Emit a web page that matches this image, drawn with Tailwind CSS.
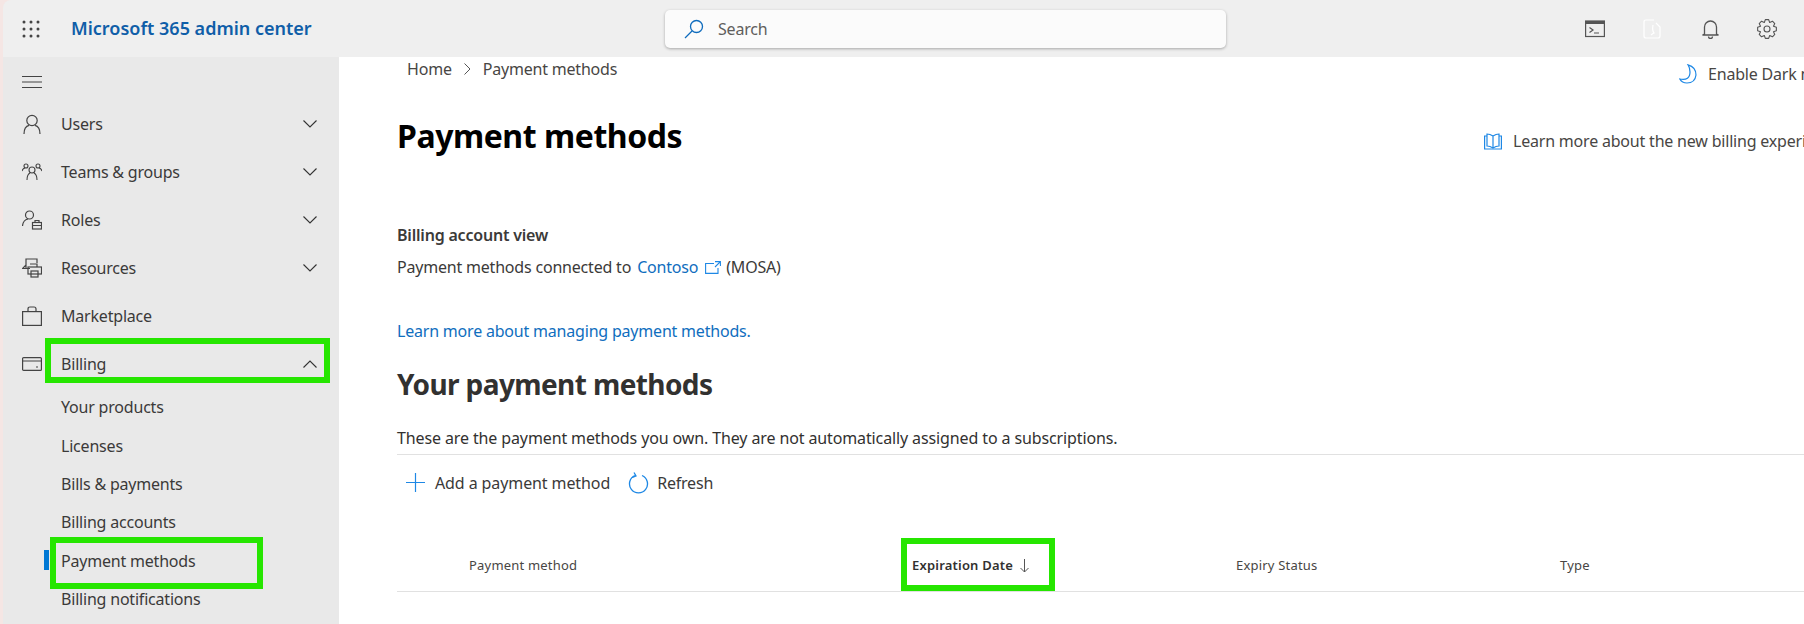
<!doctype html>
<html>
<head>
<meta charset="utf-8">
<script src="https://cdn.jsdelivr.net/npm/@tailwindcss/browser@4"></script>
</head>
<body class="m-0 bg-[#f5e6e4]">
<div class="w-[1804px] h-[624px] overflow-hidden pl-[3px] font-['Noto_Sans',sans-serif] text-[#323130] relative">
  <header class="h-[57px] bg-[#efefef] rounded-tl-[8px] flex items-center relative">
    <svg class="ml-[19px] w-[18px] h-[18px] shrink-0" viewBox="0 0 18 18" fill="#444"><circle cx="2" cy="2" r="1.5"/><circle cx="9" cy="2" r="1.5"/><circle cx="16" cy="2" r="1.5"/><circle cx="2" cy="9" r="1.5"/><circle cx="9" cy="9" r="1.5"/><circle cx="16" cy="9" r="1.5"/><circle cx="2" cy="16" r="1.5"/><circle cx="9" cy="16" r="1.5"/><circle cx="16" cy="16" r="1.5"/></svg>
    <div class="ml-[31px] w-[260px] text-[18px] font-semibold text-[#0f5ea8] whitespace-nowrap tracking-[0px]">Microsoft 365 admin center</div>
    <div class="ml-[334px] w-[561px] h-[38px] bg-[#fbfbfb] rounded-[5px] shadow-[0_1px_3px_rgba(0,0,0,0.3)] flex items-center shrink-0">
      <svg class="ml-[19px] w-[20px] h-[20px]" viewBox="0 0 20 20" fill="none" stroke="#0f6cbd" stroke-width="1.3"><circle cx="12.5" cy="7.5" r="6"/><path d="M8 12L1 19"/></svg>
      <span class="ml-[14px] text-[16px] text-[#605e5c] tracking-[-0.2px]">Search</span>
    </div>
    <svg class="ml-[359px] w-[20px] h-[18px] shrink-0" viewBox="0 0 20 18" fill="none" stroke="#555" stroke-width="1.2"><rect x="0.6" y="1" width="18.8" height="15.5"/><path d="M0.6 2.5H19.4" stroke-width="3"/><path d="M4.5 7.5L8 10L4.5 12.5M9 13H14"/></svg>
    <svg class="ml-[38px] w-[18px] h-[20px] shrink-0" viewBox="0 0 18 20" fill="none" stroke="#ffffff" stroke-width="1.2"><path d="M11 1H3Q1 1 1 3V17Q1 19 3 19H15Q17 19 17 17V8L13 4"/><path d="M10 6Q9 12 11 14Q9 15 8 16"/></svg>
    <svg class="ml-[41px] w-[17px] h-[20px] shrink-0" viewBox="0 0 17 20" fill="none" stroke="#555" stroke-width="1.3"><path d="M2.5 15V8a6 6 0 0 1 12 0v7l2 1H.5z"/><path d="M6.5 17.5a2 2 0 0 0 4 0"/></svg>
    <svg class="ml-[38px] w-[20px] h-[20px] shrink-0" viewBox="0 0 20 20" fill="none" stroke="#555" stroke-width="1.1" stroke-linejoin="round"><circle cx="10" cy="10" r="3"/><path d="M8.35 .64L11.65 .64L12.68 3.53L15.45 2.22L17.78 4.55L16.47 7.32L19.36 8.35L19.36 11.65L16.47 12.68L17.78 15.45L15.45 17.78L12.68 16.47L11.65 19.36L8.35 19.36L7.32 16.47L4.55 17.78L2.22 15.45L3.53 12.68L.64 11.65L.64 8.35L3.53 7.32L2.22 4.55L4.55 2.22L7.32 3.53Z"/></svg>
  </header>
  <div class="flex h-[567px]">
    <nav class="w-[336px] shrink-0 bg-[#e9e9e9] text-[16px] text-[#3b3a39] tracking-[-0.2px]">
      <div class="h-[43px] flex items-center pl-[19px] pt-[6px]">
        <svg class="w-[20px] h-[12px]" viewBox="0 0 20 12" stroke="#444" stroke-width="1"><path d="M0 .5H20M0 6H20M0 11.5H20"/></svg>
      </div>
      <div class="h-[48px] flex items-center pl-[19px]">
        <svg class="w-[20px] h-[20px] shrink-0" viewBox="0 0 20 20" fill="none" stroke="#444" stroke-width="1.2"><circle cx="10" cy="6.5" r="5.2"/><path d="M2 20Q2 12.5 7 11.3M18 20Q18 12.5 13 11.3"/></svg>
        <span class="ml-[19px]">Users</span>
        <svg class="ml-auto mr-[22px] w-[14px] h-[8px]" viewBox="0 0 14 8" fill="none" stroke="#333" stroke-width="1.1"><path d="M.5.5L7 7L13.5.5"/></svg>
      </div>
      <div class="h-[48px] flex items-center pl-[19px]">
        <svg class="w-[20px] h-[18px] shrink-0" viewBox="0 0 20 18" fill="none" stroke="#444" stroke-width="1.1"><circle cx="10" cy="7" r="3"/><path d="M5 17Q5 11.5 8 10M15 17Q15 11.5 12 10"/><circle cx="4" cy="3" r="2"/><circle cx="16" cy="3" r="2"/><path d="M0 8Q1 5 3 5M20 8Q19 5 17 5"/></svg>
        <span class="ml-[19px]">Teams &amp; groups</span>
        <svg class="ml-auto mr-[22px] w-[14px] h-[8px]" viewBox="0 0 14 8" fill="none" stroke="#333" stroke-width="1.1"><path d="M.5.5L7 7L13.5.5"/></svg>
      </div>
      <div class="h-[48px] flex items-center pl-[19px]">
        <svg class="w-[20px] h-[20px] shrink-0" viewBox="0 0 20 20" fill="none" stroke="#444" stroke-width="1.2"><circle cx="7.5" cy="5" r="4"/><path d="M.5 16Q1 10 6 9"/><rect x="10.5" y="12.5" width="9" height="6.5"/><path d="M13 12.5V10.5H17V12.5M10.5 15.5H19.5"/></svg>
        <span class="ml-[19px]">Roles</span>
        <svg class="ml-auto mr-[22px] w-[14px] h-[8px]" viewBox="0 0 14 8" fill="none" stroke="#333" stroke-width="1.1"><path d="M.5.5L7 7L13.5.5"/></svg>
      </div>
      <div class="h-[48px] flex items-center pl-[19px]">
        <svg class="w-[20px] h-[20px] shrink-0" viewBox="0 0 20 20" fill="none" stroke="#444" stroke-width="1.2"><path d="M4 10V1H15V5M4 7L.5 10.5H8"/><path d="M8 6H15V9"/><rect x="6" y="9" width="13.5" height="7"/><rect x="9" y="13" width="7" height="6"/></svg>
        <span class="ml-[19px]">Resources</span>
        <svg class="ml-auto mr-[22px] w-[14px] h-[8px]" viewBox="0 0 14 8" fill="none" stroke="#333" stroke-width="1.1"><path d="M.5.5L7 7L13.5.5"/></svg>
      </div>
      <div class="h-[48px] flex items-center pl-[19px]">
        <svg class="w-[20px] h-[20px] shrink-0" viewBox="0 0 20 20" fill="none" stroke="#444" stroke-width="1.2"><rect x=".6" y="5.6" width="18.8" height="13.8"/><path d="M6 5.5V3Q6 1 8 1H12Q14 1 14 3V5.5"/></svg>
        <span class="ml-[19px]">Marketplace</span>
      </div>
      <div class="h-[48px] flex items-center pl-[19px]">
        <svg class="w-[20px] h-[14px] shrink-0" viewBox="0 0 20 14" fill="none" stroke="#444" stroke-width="1.2"><rect x=".6" y=".6" width="18.8" height="12.8" rx="1"/><path d="M.6 4H19.4M14 10H16"/></svg>
        <span class="ml-[19px]">Billing</span>
        <svg class="ml-auto mr-[22px] w-[14px] h-[8px]" viewBox="0 0 14 8" fill="none" stroke="#333" stroke-width="1.1"><path d="M.5 7.5L7 1L13.5 7.5"/></svg>
      </div>
      <div class="pl-[58px]">
        <div class="h-[38.4px] flex items-center">Your products</div>
        <div class="h-[38.4px] flex items-center">Licenses</div>
        <div class="h-[38.4px] flex items-center">Bills &amp; payments</div>
        <div class="h-[38.4px] flex items-center">Billing accounts</div>
        <div class="h-[38.4px] flex items-center relative">Payment methods
          <span class="absolute left-[-17px] top-[8px] w-[5px] h-[20px] bg-[#0078d4]"></span>
        </div>
        <div class="h-[38.4px] flex items-center">Billing notifications</div>
      </div>
    </nav>
    <main class="flex-1 min-w-0 bg-white overflow-hidden pl-[58px] text-[16px] tracking-[-0.2px]">
      <div class="flex items-start">
        <div class="flex items-center pl-[10px] h-[24px] text-[#484644]">
          <span>Home</span>
          <svg class="mx-[12px] w-[7px] h-[12px]" viewBox="0 0 7 12" fill="none" stroke="#555" stroke-width="1"><path d="M.5.5L6 6L.5 11.5"/></svg>
          <span>Payment methods</span>
        </div>
        <div class="ml-auto mt-[5px] w-[125px] shrink-0 flex items-center gap-[11px] whitespace-nowrap text-[#484644]">
          <svg class="w-[18px] h-[20px] shrink-0" viewBox="0 0 18 20" fill="none" stroke="#1e88e5" stroke-width="1.2"><path d="M9 .8Q17 3 17 11Q16 19 8 19Q3 19 .8 15Q11 17 11 8Q11 4 9 .8z"/></svg>
          <span>Enable Dark mode</span>
        </div>
      </div>
      <div class="flex items-center mt-[21px] h-[58px]">
        <h1 class="text-[32px] font-bold text-black tracking-[-0.45px] whitespace-nowrap">Payment methods</h1>
        <div class="ml-auto w-[320px] shrink-0 flex items-center gap-[11px] whitespace-nowrap text-[#484644] pt-[10px]">
          <svg class="w-[18px] h-[17px] shrink-0" viewBox="0 0 18 17" fill="none" stroke="#1e88e5" stroke-width="1.2"><path d="M9 3Q6 1 3 1V13Q6 13 9 15Q12 13 15 13V1Q12 1 9 3V15"/><path d="M3 3H.6V16H17.4V3H15"/></svg>
          <span>Learn more about the new billing experience</span>
        </div>
      </div>
      <div class="mt-[58px] font-semibold text-[#3b3a39] h-[24px] leading-[24px]">Billing account view</div>
      <div class="mt-[8px] h-[24px] leading-[24px] flex items-center text-[#3b3a39]">
        <span>Payment methods connected to</span>
        <span class="ml-[6px] text-[#106ebe]">Contoso</span>
        <svg class="ml-[7px] w-[16px] h-[13px]" viewBox="0 0 16 13" fill="none" stroke="#1e88e5" stroke-width="1.1"><path d="M9 2.5H.6V12.4H13V7M10 .6H15.4V5M15.4 .6L10 6"/></svg>
        <span class="ml-[5px]">(MOSA)</span>
      </div>
      <a class="block mt-[40px] h-[24px] leading-[24px] text-[#106ebe]">Learn more about managing payment methods.</a>
      <h2 class="mt-[19px] h-[44px] leading-[44px] text-[28px] font-bold text-[#323130] tracking-[-0.6px]">Your payment methods</h2>
      <p class="mt-[20px] h-[24px] leading-[24px] text-[#323130] tracking-[-0.12px]">These are the payment methods you own. They are not automatically assigned to a subscriptions.</p>
      <div class="mt-[4px] border-t border-[#e1e1e1] h-[56px] flex items-center text-[#3b3a39]">
        <svg class="ml-[9px] w-[19px] h-[19px]" viewBox="0 0 19 19" stroke="#1e88e5" stroke-width="1.2"><path d="M9.5 0V19M0 9.5H19"/></svg>
        <span class="ml-[10px] tracking-[-0.1px]">Add a payment method</span>
        <svg class="ml-[18px] w-[21px] h-[22px]" viewBox="0 0 21 22" fill="none" stroke="#1e88e5" stroke-width="1.3"><path d="M7 3.5A9 9 0 1 0 14 3.5M6 .5L8 4L4.5 5.5"/></svg>
        <span class="ml-[8px]">Refresh</span>
      </div>
      <div class="mt-[46px] h-[36px] border-b border-[#e1e1e1] flex items-start text-[13px] tracking-[0.2px] text-[#484644]">
        <span class="ml-[72px] w-[443px]">Payment method</span>
        <span class="w-[324px] flex items-center font-semibold text-[#323130]">Expiration Date
          <svg class="ml-[7px] w-[9px] h-[14px]" viewBox="0 0 9 14" fill="none" stroke="#555" stroke-width="1"><path d="M4.5 0V13M.5 9L4.5 13L8.5 9"/></svg>
        </span>
        <span class="w-[324px]">Expiry Status</span>
        <span>Type</span>
      </div>
    </main>
  </div>
  <div class="absolute left-[45px] top-[338px] w-[285px] h-[45px] border-[6px] border-[#26e600]"></div>
  <div class="absolute left-[50px] top-[537px] w-[213px] h-[52px] border-[6px] border-[#26e600]"></div>
  <div class="absolute left-[901px] top-[538px] w-[154px] h-[53px] border-[6px] border-[#26e600]"></div>
</div>
</body>
</html>
